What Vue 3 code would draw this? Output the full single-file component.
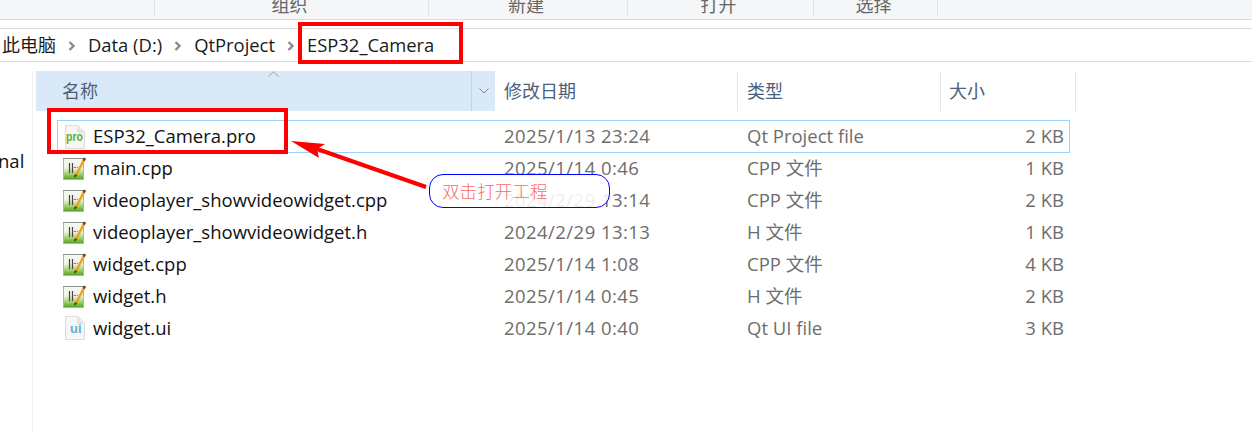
<script setup>
const groups = [
  { label: '组织', width: 274 },
  { label: '新建', width: 199 },
  { label: '打开', width: 186 },
  { label: '选择', width: 125 }
]
const crumbs = ['Data (D:)', 'QtProject', 'ESP32_Camera']
const files = [
  { name: 'ESP32_Camera.pro', date: '2025/1/13 23:24', type: 'Qt Project file', size: '2 KB', icon: 'pro', selected: true },
  { name: 'main.cpp', date: '2025/1/14 0:46', type: 'CPP 文件', size: '1 KB', icon: 'code' },
  { name: 'videoplayer_showvideowidget.cpp', date: '2024/2/29 13:14', type: 'CPP 文件', size: '2 KB', icon: 'code' },
  { name: 'videoplayer_showvideowidget.h', date: '2024/2/29 13:13', type: 'H 文件', size: '1 KB', icon: 'code' },
  { name: 'widget.cpp', date: '2025/1/14 1:08', type: 'CPP 文件', size: '4 KB', icon: 'code' },
  { name: 'widget.h', date: '2025/1/14 0:45', type: 'H 文件', size: '2 KB', icon: 'code' },
  { name: 'widget.ui', date: '2025/1/14 0:40', type: 'Qt UI file', size: '3 KB', icon: 'ui' }
]
</script>

<template>
  <div class="page">
    <div class="toolbar">
      <div v-for="g in groups" :key="g.label" class="group" :style="{ width: g.width + 'px' }">{{ g.label }}</div>
    </div>
    <div class="address">
      <span class="crumb first">此电脑</span>
      <template v-for="c in crumbs" :key="c">
        <svg class="chev" width="8" height="10" viewBox="0 0 8 10"><path d="M1.5 1 L5.5 5 L1.5 9" fill="none" stroke="#8a8a8a" stroke-width="2.4"/></svg>
        <span class="crumb">{{ c }}</span>
      </template>
    </div>
    <div class="body">
      <div class="side"><span class="nal">nal</span></div>
      <div class="list">
        <div class="head">
          <div class="h name">
            <span>名称</span>
            <svg class="sort" width="11" height="6" viewBox="0 0 11 6"><path d="M0.5 5.5 L5.5 0.8 L10.5 5.5" fill="none" stroke="#9aa3ab"/></svg>
            <span class="drop">
              <svg width="10" height="6" viewBox="0 0 10 6"><path d="M0.5 0.5 L5 5 L9.5 0.5" fill="none" stroke="#7d8894"/></svg>
            </span>
          </div>
          <div class="h date">修改日期</div>
          <div class="h type">类型</div>
          <div class="h size">大小</div>
        </div>
        <div class="rows">
          <div v-for="f in files" :key="f.name" class="row" :class="{ selected: f.selected }">
            <div class="cell-name">
              <svg v-if="f.icon === 'code'" class="icon" width="23" height="24" viewBox="0 0 23 24">
                <defs>
                  <linearGradient id="codeFill" x1="0" y1="0" x2="0" y2="1">
                    <stop offset="0" stop-color="#f8f9f4"/>
                    <stop offset="0.45" stop-color="#eef4e2"/>
                    <stop offset="0.66" stop-color="#b6dc8c"/>
                    <stop offset="1" stop-color="#4ea519"/>
                  </linearGradient>
                </defs>
                <rect x="0.5" y="2.5" width="20" height="21" fill="url(#codeFill)" stroke="#b0b4aa"/>
                <path d="M0.5 2.5 H20.5" stroke="#6d7268" stroke-dasharray="1 1"/>
                <path d="M6.5 7 V17 M9.5 7 V17" stroke="#454545" stroke-width="1.2"/>
                <path d="M11 11.5 H15" stroke="#777" stroke-dasharray="2 1"/>
                <path d="M13 19 L21 4" stroke="#eaa51f" stroke-width="2.6"/>
                <path d="M20.6 4.6 L22 2" stroke="#8f3a1c" stroke-width="2.6"/>
                <path d="M11.8 18 L11 22 L14.2 19.6 Z" fill="#553318"/>
              </svg>
              <svg v-else class="icon" width="23" height="24" viewBox="0 0 23 24">
                <path d="M2.5 0.5 H15 L21.5 7 V23.5 H2.5 Z" fill="#f6f6f6" stroke="#dcdcdc"/>
                <path d="M15 0.5 V7 H21.5" fill="#e8e8e8" stroke="#dcdcdc"/>
                <text v-if="f.icon === 'pro'" x="3" y="15.5" class="pro" textLength="17" lengthAdjust="spacingAndGlyphs">pro</text>
                <text v-else x="7" y="16.5" class="ui">ui</text>
              </svg>
              <span>{{ f.name }}</span>
            </div>
            <div class="cell date">{{ f.date }}</div>
            <div class="cell type">{{ f.type }}</div>
            <div class="cell size">{{ f.size }}</div>
          </div>
        </div>
      </div>
    </div>

    <div class="bubble">双击打开工程</div>
    <div class="mark mark-crumb"></div>
    <div class="mark mark-file"></div>
    <svg class="arrow" width="150" height="70" viewBox="0 0 150 70">
      <path d="M26 18 L135 56" stroke="#f00" stroke-width="4" fill="none"/>
      <path d="M0 10 L34 13 L26 18 L28 27 Z" fill="#f00"/>
    </svg>
  </div>
</template>

<style>
html, body { margin: 0; background: #fff; overflow: hidden; }
</style>

<style scoped>
.page {
  position: relative;
  width: 1252px;
  height: 431px;
  overflow: hidden;
  background: #fff;
  font-family: "Open Sans", "Noto Sans CJK SC", sans-serif;
  font-size: 18.5px;
  color: #111;
}
.toolbar {
  display: flex;
  height: 19px;
  padding-left: 154px;
  background: #f5f6f7;
  border-bottom: 1px solid #dadbdc;
  overflow: hidden;
  color: #666;
  font-size: 18px;
}
.group {
  box-sizing: border-box;
  height: 16px;
  border-left: 1px solid #e2e3e4;
  line-height: 10px;
  padding-right: 4px;
  text-align: center;
}
.group:last-child { border-right: 1px solid #e2e3e4; }
.address {
  display: flex;
  align-items: center;
  height: 32px;
  margin-top: 8px;
  padding-left: 2px;
  padding-bottom: 0;
  border-top: 1px solid #dcdcdc;
  border-bottom: 1px solid #dcdcdc;
  font-size: 18.4px;
  line-height: 30px;
  color: #1a1a1a;
}
.crumb { white-space: nowrap; }
.crumb.first { font-size: 18px; }
.chev { margin: 1px 12px 0 12px; flex: none; }
.body { display: flex; height: 369px; }
.side {
  flex: none;
  width: 33px;
  box-sizing: border-box;
  margin-top: 9px;
  border-right: 1px solid #f0f0f0;
  padding-top: 78px;
  overflow: hidden;
}
.nal { position: relative; left: -2px; display: block; line-height: 24px; }
.list { padding: 9px 0 0 3px; }
.head { display: flex; height: 40px; color: #4c607a; font-size: 18px; line-height: 38px; }
.h {
  box-sizing: border-box;
  display: flex;
  align-items: center;
  border-right: 1px solid #e5e5e5;
  white-space: nowrap;
}
.h.name {
  position: relative;
  width: 459px;
  padding-left: 26px;
  background: #d9e9f7;
  border: 0;
}
.sort { position: absolute; left: 232px; top: 0; }
.drop {
  position: absolute;
  right: 0;
  top: 0;
  bottom: 0;
  width: 24px;
  box-sizing: border-box;
  border-left: 1px solid #c2d3e0;
  display: flex;
  align-items: center;
  justify-content: center;
}
.h.date { width: 243px; padding-left: 9px; }
.h.type { width: 203px; padding-left: 9px; }
.h.size { width: 135px; padding-left: 8px; }
.rows { margin-top: 9px; padding-left: 21px; }
.row {
  display: flex;
  align-items: center;
  box-sizing: border-box;
  width: 1013px;
  height: 32px;
  border: 1px solid transparent;
  color: #6d6d6d;
}
.row.selected { border-color: #99d1ff; height: 33px; margin-bottom: -1px; }
.cell-name {
  flex: none;
  width: 446px;
  display: flex;
  align-items: center;
  gap: 7px;
  padding-left: 5px;
  box-sizing: border-box;
  color: #111;
  white-space: nowrap;
}
.cell-name span, .cell { position: relative; top: -1px; }
.icon { flex: none; }
.pro { font: 700 13px "Liberation Sans", sans-serif; fill: #5fae1f; }
.ui { font: 700 13px "Liberation Sans", sans-serif; fill: #5fb0cc; }
.cell { white-space: nowrap; flex: none; box-sizing: border-box; }
.cell.date { width: 243px; letter-spacing: 0.45px; }
.cell.type { width: 200px; }
.cell.size { width: 122px; text-align: right; padding-right: 5px; }
.mark {
  position: absolute;
  box-sizing: border-box;
  border: 4px solid #f00;
}
.mark-crumb { left: 298px; top: 22px; width: 165px; height: 42px; }
.mark-file { left: 47px; top: 108px; width: 241px; height: 46px; }
.arrow { position: absolute; left: 291px; top: 131px; }
.bubble {
  position: absolute;
  left: 429px;
  top: 174px;
  width: 181px;
  height: 34px;
  box-sizing: border-box;
  border: 1px solid #00f;
  border-radius: 14px;
  padding-left: 12px;
  line-height: 32px;
  font-size: 17.6px;
  font-weight: 300;
  color: #ff6a6a;
  background: rgba(255, 255, 255, 0.88);
  font-family: "Noto Sans CJK SC", sans-serif;
  white-space: nowrap;
}
</style>
